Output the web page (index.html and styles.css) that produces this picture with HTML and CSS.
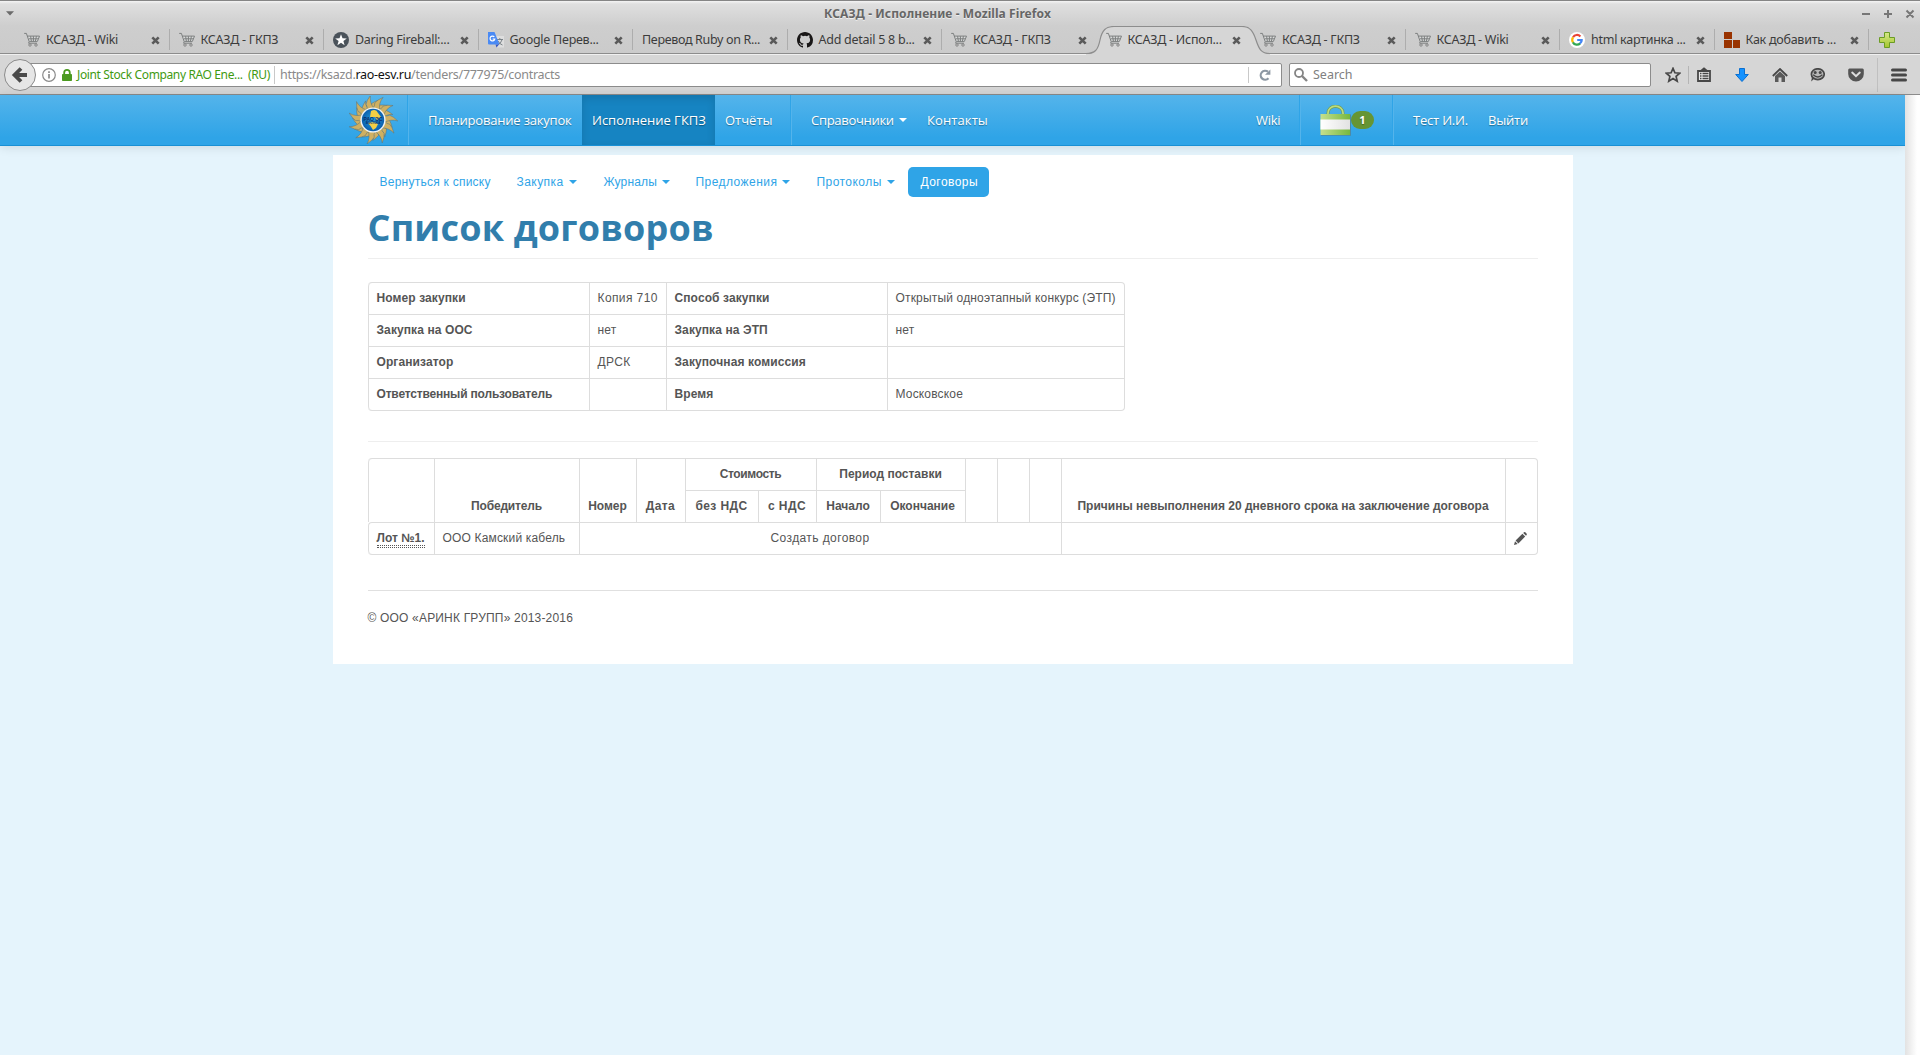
FILE: index.html
```html
<!DOCTYPE html>
<html lang="ru">
<head>
<meta charset="utf-8">
<title>КСАЗД - Исполнение</title>
<link rel="stylesheet" href="styles.css">
</head>
<body>
<svg class="defs" width="0" height="0" aria-hidden="true">
  <defs>
    <linearGradient id="bagGreen" x1="0" x2="1"><stop offset="0" stop-color="#c5e08e"/><stop offset="1" stop-color="#76b83f"/></linearGradient>
    <linearGradient id="bagWhite" x1="0" x2="1"><stop offset="0" stop-color="#ffffff"/><stop offset="1" stop-color="#e2e2e2"/></linearGradient>
    <linearGradient id="plusGreen" x1="0" y1="0" x2="0" y2="1"><stop offset="0" stop-color="#d6e88a"/><stop offset="1" stop-color="#a4c62e"/></linearGradient>
    <radialGradient id="globe"><stop offset="0" stop-color="#25a3dc"/><stop offset="1" stop-color="#0b5fae"/></radialGradient>
    <symbol id="cart" viewBox="0 0 16 16">
      <path d="M3.6 4.2H15.3L13.4 9.4H5.2z" fill="#d9dada"/>
      <path d="M.2 1.4H2.4L5.2 9.6 4.6 11.2H13M3.4 4.1H15.5L13.4 9.4H5.4M5 6.8H14M6.6 4.2L7.4 9.4M9.4 4.2V9.4M12.4 4.2L11.4 9.4" fill="none" stroke="#7c7f7f" stroke-width="1"/>
      <circle cx="6" cy="13" r="1.2" fill="#ddd" stroke="#777" stroke-width=".9"/><circle cx="12" cy="13" r="1.2" fill="#ddd" stroke="#777" stroke-width=".9"/>
    </symbol>
    <symbol id="close" viewBox="0 0 9 9"><path d="M1.3 1.3L7.7 7.7M7.7 1.3L1.3 7.7" fill="none" stroke="#5a5a5a" stroke-width="2.6"/></symbol>
    <path id="ray" d="M-4 -10.5Q-1.5 -14 -3 -17Q-1.5 -20.5 3.5 -24.5Q.5 -18 4 -10.5z"/>
    <path id="ray-small" d="M-3.5 -11Q-1 -14 -2.5 -16Q0 -18 4.5 -20Q1 -15 3.5 -11z"/>
  </defs>
</svg>

<header class="chrome">
  <div class="titlebar">
    <svg class="win-menu" width="8" height="5"><path d="M0 .3H8L4 4.6z" fill="#6b6b6b"/></svg>
    <div class="win-title">КСАЗД - Исполнение - Mozilla Firefox</div>
    <svg class="win-buttons" width="54" height="10" fill="none" stroke="#777" stroke-width="2"><path d="M1 5H9M23 5H31M27 1V9M45.5 1.5L52.5 8.5M52.5 1.5L45.5 8.5"/></svg>
  </div>
  <div class="tabs">
    <div class="tab"><svg class="fav"><use href="#cart"/></svg><span>КСАЗД - Wiki</span><svg class="x"><use href="#close"/></svg></div>
    <div class="tab"><svg class="fav"><use href="#cart"/></svg><span>КСАЗД - ГКПЗ</span><svg class="x"><use href="#close"/></svg></div>
    <div class="tab"><svg class="fav" viewBox="0 0 16 16"><circle cx="8" cy="8" r="8" fill="#4a525a"/><path d="M8 2.2L9.5 6.3 13.8 6.4 10.4 9 11.6 13.2 8 10.7 4.4 13.2 5.6 9 2.2 6.4 6.5 6.3z" fill="#fff"/></svg><span>Daring Fireball:...</span><svg class="x"><use href="#close"/></svg></div>
    <div class="tab"><svg class="fav" viewBox="0 0 16 16"><path d="M6 4H16V15.5H9z" fill="#dedede"/><path d="M8.5 7.5H15M11.8 6V7.5M14 7.8Q13 11.5 9.5 13M10 9Q11.5 12 14.5 13" fill="none" stroke="#7a8288" stroke-width="1"/><path d="M0 0H6.5L11.5 12.5H1Q0 12.5 0 11.5z" fill="#4a8af4"/><path d="M7.5 12.5H11L8.5 15.6z" fill="#3457c4"/><path d="M6.3 4.9A2.4 2.4 0 1 0 6.8 7H4.6" fill="none" stroke="#fff" stroke-width="1.2"/></svg><span>Google Перев...</span><svg class="x"><use href="#close"/></svg></div>
    <div class="tab"><span class="tight">Перевод Ruby on R...</span><svg class="x"><use href="#close"/></svg></div>
    <div class="tab"><svg class="fav" viewBox="0 0 16 16"><path fill="#191717" d="M8 0C3.58 0 0 3.58 0 8c0 3.54 2.29 6.53 5.47 7.59.4.07.55-.17.55-.38 0-.19-.01-.82-.01-1.49-2.01.37-2.53-.49-2.69-.94-.09-.23-.48-.94-.82-1.13-.28-.15-.68-.52-.01-.53.63-.01 1.08.58 1.23.82.72 1.21 1.87.87 2.33.66.07-.52.28-.87.51-1.07-1.78-.2-3.64-.89-3.64-3.95 0-.87.31-1.59.82-2.15-.08-.2-.36-1.02.08-2.12 0 0 .67-.21 2.2.82a7.6 7.6 0 0 1 4 0c1.53-1.04 2.2-.82 2.2-.82.44 1.1.16 1.92.08 2.12.51.56.82 1.27.82 2.15 0 3.07-1.87 3.75-3.65 3.95.29.25.54.73.54 1.48 0 1.07-.01 1.93-.01 2.2 0 .21.15.46.55.38A8.01 8.01 0 0 0 16 8c0-4.42-3.58-8-8-8z"/></svg><span>Add detail 5 8 b...</span><svg class="x"><use href="#close"/></svg></div>
    <div class="tab plain"><svg class="fav"><use href="#cart"/></svg><span>КСАЗД - ГКПЗ</span><svg class="x"><use href="#close"/></svg></div>
    <div class="tab plain active">
      <svg class="tab-shape" width="184" height="29"><path d="M0 28C9 28 12 24 14 14S20 .5 28 .5H156C164 .5 167 5 170 14S175 28 184 28V29H0z" fill="#d6d6d6"/><path d="M0 27.5C9 27.5 12 24 14 14S20 .5 28 .5H156C164 .5 167 5 170 14S175 27.5 184 27.5" fill="none" stroke="#8d8d8d" stroke-width="1.2"/></svg>
      <svg class="fav"><use href="#cart"/></svg><span>КСАЗД - Испол...</span><svg class="x"><use href="#close"/></svg></div>
    <div class="tab"><svg class="fav"><use href="#cart"/></svg><span>КСАЗД - ГКПЗ</span><svg class="x"><use href="#close"/></svg></div>
    <div class="tab"><svg class="fav"><use href="#cart"/></svg><span>КСАЗД - Wiki</span><svg class="x"><use href="#close"/></svg></div>
    <div class="tab"><svg class="fav" viewBox="0 0 16 16"><circle cx="8" cy="8" r="8" fill="#fff"/><g fill="none" stroke-width="2.2"><path d="M4 5.2A4.7 4.7 0 0 1 11.4 4.4" stroke="#ea4335"/><path d="M4 10.5A4.7 4.7 0 0 1 4 5.4" stroke="#fbbc05"/><path d="M3.9 10.4A4.7 4.7 0 0 0 11.2 11.4" stroke="#34a853"/><path d="M11 11.5Q12.8 10 12.7 8H8.2" stroke="#4285f4"/></g></svg><span>html картинка ...</span><svg class="x"><use href="#close"/></svg></div>
    <div class="tab"><svg class="fav" viewBox="0 0 16 16"><path d="M0 0H8V7H0zM0 8H8V16H0zM9 8H16V16H9z" fill="#993300"/></svg><span>Как добавить ...</span><svg class="x"><use href="#close"/></svg></div>
    <svg class="new-tab" width="16" height="16"><path d="M5.5 .5H10.5V5.5H15.5V10.5H10.5V15.5H5.5V10.5H.5V5.5H5.5z" fill="url(#plusGreen)" stroke="#6b9c24"/></svg>
  </div>
  <div class="toolbar">
    <svg class="back" width="32" height="32"><circle cx="16" cy="16" r="15.5" fill="#e6e6e6" stroke="#8a8a8a"/><path d="M17 9.5L10.5 16 17 22.5M11 16H23" fill="none" stroke="#4a4a4a" stroke-width="3.8"/></svg>
    <div class="urlbar">
      <svg class="info" width="14" height="14"><circle cx="7" cy="7" r="6.3" fill="none" stroke="#8a8a8a" stroke-width="1.2"/><path d="M7 6V10.5M7 3.3V5" stroke="#8a8a8a" stroke-width="1.7"/></svg>
      <svg class="lock" width="10" height="12"><path d="M2.2 6V3.7a2.8 2.8 0 0 1 5.6 0V6" fill="none" stroke="#4b9a20" stroke-width="1.8"/><rect y="5" width="10" height="7" rx=".8" fill="#4b9a20"/></svg>
      <span class="identity">Joint Stock Company RAO Ene...</span><span class="identity country">(RU)</span>
      <span class="url">https://ksazd.<b>rao-esv.ru</b>/tenders/777975/contracts</span>
      <i class="url-sep"></i>
      <svg class="reload" width="12" height="12"><path d="M9.5 9.3A4.5 4.5 0 1 1 9 2.7" fill="none" stroke="#8c97a3" stroke-width="2.2"/><path d="M11.4 .4V5.8H6z" fill="#8c97a3"/></svg>
    </div>
    <div class="search"><svg width="14" height="14" fill="none" stroke="#858585"><circle cx="5" cy="5" r="4" stroke-width="1.8"/><path d="M8 8L13 13" stroke-width="2.4"/></svg><span>Search</span></div>
    <div class="tools">
      <svg class="star" width="16" height="16" viewBox="0 0 16 16"><path d="M8 1.4L9.9 5.8 14.7 6.2 11.1 9.4 12.2 14.2 8 11.6 3.8 14.2 4.9 9.4 1.3 6.2 6.1 5.8z" fill="none" stroke="#474747" stroke-width="1.7"/></svg>
      <i class="tool-sep"></i>
      <svg class="list" width="14" height="15"><path d="M1 4H13V14H1z" fill="#e8e8e8" stroke="#474747" stroke-width="1.8"/><path d="M3 3.5L7 .3 11 3.5z" fill="#474747"/><path d="M3 6.5H4.5M5.5 6.5H11.5M3 9H4.5M5.5 9H11.5M3 11.5H4.5M5.5 11.5H11.5" stroke="#474747" stroke-width="1.3"/></svg>
      <svg class="download" width="14" height="14"><path d="M4.5 .5H9.5V6.5H13.3L7 13.5 .7 6.5H4.5z" fill="#1492ff" stroke="#0a6fd0"/></svg>
      <svg class="home" width="16" height="14"><path d="M.8 8L8 1 15.2 8" fill="none" stroke="#474747" stroke-width="1.8"/><path d="M3 8L8 3.4 13 8V14H9.5V9.5H6.5V14H3z" fill="#5a5a5a"/></svg>
      <svg class="chat" width="15" height="14"><path d="M1.2 13.5L2 9H6z" fill="#474747"/><ellipse cx="7.8" cy="6.2" rx="6.4" ry="5.4" fill="#b8b8b8" stroke="#474747" stroke-width="1.7"/><circle cx="5.2" cy="4.6" r="1.5" fill="#474747"/><circle cx="10.2" cy="4.6" r="1.5" fill="#474747"/><path d="M3.2 6.8Q7.8 11 12.4 6.8" fill="none" stroke="#474747" stroke-width="1.4"/></svg>
      <svg class="pocket" width="16" height="14"><path d="M1.5 .5H14.5Q15.8 .5 15.8 2V6A7.8 7.5 0 0 1 .2 6V2Q.2 .5 1.5 .5z" fill="#555"/><path d="M4.2 4.6L8 8.2 11.8 4.6" fill="none" stroke="#ddd" stroke-width="2" stroke-linecap="round"/></svg>
      <i class="menu-sep"></i>
      <svg class="menu" width="16" height="14" stroke="#474747" stroke-width="3" stroke-linecap="round"><path d="M1.5 2H14.5M1.5 7H14.5M1.5 12H14.5"/></svg>
    </div>
  </div>
</header>

<div class="viewport">
<div class="page">
  <nav class="navbar">
    <div class="brand"><svg width="50" height="48" viewBox="-25 -24 50 48">
      <g fill="#cfb062" stroke="#58737c" stroke-width=".5">
        <use href="#ray-small" transform="rotate(2)"/><use href="#ray-small" transform="rotate(32)"/><use href="#ray-small" transform="rotate(62)"/><use href="#ray-small" transform="rotate(98)"/><use href="#ray-small" transform="rotate(132)"/><use href="#ray-small" transform="rotate(168)"/><use href="#ray-small" transform="rotate(201)"/><use href="#ray-small" transform="rotate(231)"/><use href="#ray-small" transform="rotate(262)"/><use href="#ray-small" transform="rotate(294)"/><use href="#ray-small" transform="rotate(326)"/>
        <use href="#ray" transform="rotate(-14)"/><use href="#ray" transform="rotate(16)"/><use href="#ray" transform="rotate(46)"/><use href="#ray" transform="rotate(84)"/><use href="#ray" transform="rotate(114)"/><use href="#ray" transform="rotate(150)"/><use href="#ray" transform="rotate(186)"/><use href="#ray" transform="rotate(216)"/><use href="#ray" transform="rotate(246)"/><use href="#ray" transform="rotate(278)"/><use href="#ray" transform="rotate(310)"/>
      </g>
      <circle r="12.6" fill="#eef4f8"/><circle r="11.2" fill="url(#globe)"/>
      <path d="M-2 -9Q3 -12 5 -7L8 -3 4 0 2 -3H-3zM-5 3Q1 1 5 4L3 8 0 10Q-2 6 -5 3z" fill="#f3cf45"/>
      <text y=".8" text-anchor="middle" class="logo-big">РАО ЭС</text><text y="4.2" text-anchor="middle" class="logo-small">ВОСТОКА</text>
    </svg></div>
    <div class="group g1">
      <a class="n1">Планирование закупок</a><a class="n2 current">Исполнение ГКПЗ</a><a class="n3">Отчёты</a>
    </div>
    <div class="group g2"><a class="n4"><span>Справочники</span><i class="caret"></i></a><a class="n5">Контакты</a></div>
    <div class="g3"><a class="n6">Wiki</a></div>
    <div class="group basket"><svg width="31" height="31"><path d="M8 9.5V8A7.5 6.8 0 0 1 23 8V9.5" fill="none" stroke="#6d9c57" stroke-width="3"/><path d="M8 9.5V8A7.5 6.8 0 0 1 23 8V9.5" fill="none" stroke="#bbdc80" stroke-width="1.7"/><rect x="1" y="9.5" width="30" height="21.3" fill="#4c8aa6"/><rect x=".5" y="9" width="29.5" height="21" fill="url(#bagGreen)"/><rect x=".5" y="14.5" width="29.5" height="10" fill="url(#bagWhite)"/></svg><b class="badge">1</b></div>
    <div class="group g5"><a class="n7">Тест И.И.</a><a class="n8">Выйти</a></div>
  </nav>

  <main class="container">
    <ul class="pills">
      <li class="p1"><span>Вернуться к списку</span></li>
      <li class="p2"><span>Закупка</span><i class="caret"></i></li>
      <li class="p3"><span>Журналы</span><i class="caret"></i></li>
      <li class="p4"><span>Предложения</span><i class="caret"></i></li>
      <li class="p5"><span>Протоколы</span><i class="caret"></i></li>
      <li class="p6"><span>Договоры</span></li>
    </ul>
    <h1>Список договоров</h1>

    <table class="grid summary">
      <colgroup><col class="c221"><col class="c77"><col class="c221"><col class="c237"></colgroup>
      <tbody>
      <tr><th>Номер закупки</th><td class="loose">Копия 710</td><th>Способ закупки</th><td>Открытый одноэтапный конкурс (ЭТП)</td></tr>
      <tr><th>Закупка на ООС</th><td>нет</td><th>Закупка на ЭТП</th><td>нет</td></tr>
      <tr><th>Организатор</th><td class="loose">ДРСК</td><th>Закупочная комиссия</th><td></td></tr>
      <tr><th class="tight">Ответственный пользователь</th><td></td><th>Время</th><td>Московское</td></tr>
      </tbody>
    </table>

    <hr class="soft">

    <table class="grid contracts">
      <colgroup><col class="c66"><col class="c145"><col class="c57"><col class="c49"><col class="c73"><col class="c58"><col class="c64"><col class="c85"><col class="c32"><col class="c32"><col class="c32"><col class="c444"><col class="c32"></colgroup>
      <thead>
      <tr><th rowspan="2"></th><th rowspan="2" class="tight">Победитель</th><th rowspan="2">Номер</th><th rowspan="2" class="loose">Дата</th><th colspan="2" class="tighter">Стоимость</th><th colspan="2">Период поставки</th><th rowspan="2"></th><th rowspan="2"></th><th rowspan="2"></th><th rowspan="2">Причины невыполнения 20 дневного срока на заключение договора</th><th rowspan="2"></th></tr>
      <tr><th class="loose">без НДС</th><th class="loose">с НДС</th><th>Начало</th><th>Окончание</th></tr>
      </thead>
      <tbody>
      <tr><td><b class="lot"><span>Лот №1.</span></b></td><td>ООО Камский кабель</td><td class="create loose" colspan="9">Создать договор</td><td></td><td><svg class="pencil" width="13" height="13"><path d="M0 13L1 9.3 3.7 12zM1.6 8.6L8.4 1.8 11.2 4.6 4.4 11.4zM9.2 1L10 .3Q10.8 -.3 11.6 .5L12.5 1.4Q13.2 2.2 12.6 3L12 3.8z" fill="#555"/></svg></td></tr>
      </tbody>
    </table>

    <footer>© ООО «АРИНК ГРУПП» 2013-2016</footer>
  </main>
</div>
<aside class="edge"></aside>
</div>
</body>
</html>
```
FILE: styles.css
```css
* { box-sizing: border-box; }
body { margin: 0; height: 1055px; overflow: hidden; display: flex; flex-direction: column; background: #e5f4fc; color: #555; font: 12px/18px "Liberation Sans", sans-serif; }
svg { display: block; flex: none; }
.defs { position: absolute; }

/* browser window frame */
.chrome { height: 95px; flex: none; background: #d6d6d6; border-bottom: 1px solid #8c8c8c; font-family: "Noto Sans", sans-serif; color: #3c3c3c; }
.titlebar { height: 26px; border-top: 1px solid #858585; background: linear-gradient(#f4f4f4 0, #dfdfdf 3px, #cecece); display: flex; align-items: center; padding: 0 5px 0 6px; }
.win-title { flex: 1; text-align: center; font-size: 12px; letter-spacing: .08px; font-weight: 700; color: #666; text-shadow: 0 1px 0 #eee; }
.tabs { height: 29px; display: flex; padding: 0 0 0 15px; background: linear-gradient(#cecece, #cbcbcb 27px, #8c8c8c 27px, #8c8c8c 28px, #f0f0f0 28px); }
.tab { width: 154.5px; height: 27px; padding: 1px 10px 0 9px; display: flex; align-items: center; position: relative; font-size: 12.5px; letter-spacing: -.26px; white-space: nowrap; background: linear-gradient(#adadad, #adadad) right 3px / 1px 21px no-repeat; }
.tab.plain { background: none; }
.tab span { margin-left: 6px; flex: 1; position: relative; }
.tab > span:first-child { margin-left: 0; }
.tab .tight { letter-spacing: -.33px; }
.fav { width: 16px; height: 16px; position: relative; }
.x { width: 9px; height: 9px; position: relative; }
.tab-shape { position: absolute; left: -11px; top: 0; }
.new-tab { margin: 6px 0 0 10px; }
.toolbar { height: 39px; display: flex; align-items: center; padding-left: 4px; }
.back { position: relative; z-index: 1; }
.urlbar { margin-left: -8px; width: 1254px; height: 24px; border: 1px solid #8c8c8c; border-radius: 0 2px 2px 0; background: #fff; display: flex; align-items: center; font-size: 12.5px; padding-left: 13px; }
.lock { margin: 0 5px 0 6px; }
.identity { width: 171px; font-size: 12px; letter-spacing: -.37px; color: #3f9a12; white-space: nowrap; }
.country { width: 26px; }
.url { flex: 1; border-left: 1px solid #c9c9c9; padding-left: 5px; letter-spacing: -.3px; color: #8a8a8a; }
.url b { font-weight: 400; color: #111; }
.url-sep { width: 1px; height: 16px; background: #c9c9c9; }
.reload { margin: 0 10px; }
.search { margin-left: 7px; width: 362px; height: 24px; border: 1px solid #8c8c8c; border-radius: 2px; background: #fff; display: flex; align-items: center; padding-left: 4px; font-size: 12.5px; color: #808080; gap: 5px; }
.tools { display: flex; align-items: center; }
.star { margin-left: 14px; }
.tool-sep { width: 1px; height: 18px; margin-left: 7px; background: #b5b5b5; }
.list { margin-left: 8px; }
.download { margin-left: 24px; }
.home { margin-left: 23px; }
.chat { margin-left: 22px; }
.pocket { margin-left: 23px; }
.menu-sep { width: 1px; height: 34px; margin-left: 13px; background: #c0c0c0; }
.menu { margin-left: 13px; }

/* page */
.viewport { flex: 1; display: flex; }
.page { width: 1905px; display: flex; flex-direction: column; }
.edge { flex: 1; background: linear-gradient(90deg, #e2e2e2, #fff 12px); }
.navbar { height: 51px; background: linear-gradient(#54b4eb, #2fa4e7 85%); border-bottom: 1px solid #1990d5; box-shadow: 0 1px 10px rgba(0,0,0,.12); display: flex; padding-left: 348px; font: 13px/50px "Open Sans", sans-serif; color: #fff; text-shadow: 0 1px 1px rgba(0,0,0,.35); }
.brand { width: 59px; padding-top: 1px; }
.logo-big { font: 700 5px "Liberation Sans", sans-serif; fill: #0b2c6b; text-shadow: none; }
.logo-small { font: 700 3px "Liberation Sans", sans-serif; fill: #0b2c6b; text-shadow: none; }
.group { display: flex; white-space: nowrap; border-left: 1px solid #2fa4e7; box-shadow: inset 1px 0 #54b4eb; }
.g1 { width: 383px; padding-left: 10px; }
.g2 { width: 455px; padding-left: 10px; }
.g3 { width: 54px; padding-left: 1px; }
.navbar a { padding: 0 10px; }
.n1 { width: 164px; letter-spacing: -.2px; }
.n2 { width: 133px; }
.navbar .current { background: #1684c2; box-shadow: inset 0 3px 8px rgba(0,0,0,.125); }
.n4 { width: 116px; display: flex; align-items: center; letter-spacing: -.3px; }
.n5 { letter-spacing: .1px; }
.n6 { letter-spacing: -.3px; }
.n7 { width: 75px; letter-spacing: -.2px; }
.n8 { letter-spacing: -.2px; }
.caret { display: inline-block; border: 4px solid transparent; border-top-color: currentColor; border-bottom: 0; margin-left: 5px; }
.n4 .caret { margin-left: 5px; }
.basket { width: 93px; align-items: center; padding-left: 20px; }
.badge { width: 23px; height: 18px; border-radius: 9px; background: #669533; font: 700 11px/18px "Open Sans", sans-serif; text-align: center; }
.g5 { padding-left: 10px; }

.container { width: 1240px; height: 509px; margin: 9px auto 0; padding: 12px 35px 0; background: #fff; }
.pills { margin: 0; padding: 0; list-style: none; height: 30px; display: flex; line-height: 30px; color: #2fa4e7; white-space: nowrap; letter-spacing: .45px; }
.pills li { padding-left: 12px; display: flex; align-items: center; }
.pills .p1 { width: 137px; letter-spacing: .25px; }
.p2 { width: 87px; }
.pills .p3 { width: 92px; letter-spacing: .15px; }
.p4 { width: 121px; }
.p5 { width: 103px; }
.pills .p6 { width: 81px; padding-left: 13px; background: #2fa4e7; color: #fff; border-radius: 5px; }
h1 { margin: 0 0 23px; height: 62px; border-bottom: 1px solid #eee; font: 700 36px/62px "Open Sans", sans-serif; letter-spacing: .2px; color: #317eac; white-space: nowrap; }
.grid { table-layout: fixed; border-collapse: separate; border-spacing: 0; border: 1px solid #ddd; border-left: 0; border-radius: 4px; }
.grid th, .grid td { height: 32px; padding: 0 8px 1px; border-left: 1px solid #ddd; border-top: 1px solid #ddd; text-align: left; vertical-align: middle; white-space: nowrap; }
.grid th { letter-spacing: .1px; }
.grid td { letter-spacing: .17px; }
.grid .loose { letter-spacing: .4px; }
.grid .tight { letter-spacing: -.18px; }
.grid .tighter { letter-spacing: -.35px; }
.grid tr:first-child > * { border-top: 0; height: 31px; }
.grid tbody tr:last-child > :first-child { border-bottom-left-radius: 4px; }
.grid tr:first-child > :first-child { border-top-left-radius: 4px; }
.summary { width: 757px; }
.contracts { width: 1170px; }
.contracts th, .contracts .create { text-align: center; }
.contracts th { vertical-align: bottom; padding-bottom: 7px; letter-spacing: 0; }
.contracts tbody tr:first-child > * { border-top: 1px solid #ddd; height: 32px; border-top-left-radius: 0; }
.c221 { width: 221px; } .c77 { width: 77px; } .c237 { width: 237px; }
.c66 { width: 66px; } .c145 { width: 145px; } .c57 { width: 57px; } .c49 { width: 49px; } .c73 { width: 73px; } .c58 { width: 58px; } .c64 { width: 64px; } .c85 { width: 85px; } .c32 { width: 32px; } .c444 { width: 444px; }
.soft { width: 1170px; border: 0; border-top: 1px solid #eee; margin: 30px 0 16px; }
.lot { display: inline-block; line-height: 13px; letter-spacing: 0; border-bottom: 1px dotted #555; padding-bottom: 1px; margin-top: 3px; }
.lot span { display: block; border-bottom: 1px dotted #555; }
footer { margin-top: 35px; border-top: 1px solid #e0e0e0; padding-top: 18px; letter-spacing: .18px; }
```
